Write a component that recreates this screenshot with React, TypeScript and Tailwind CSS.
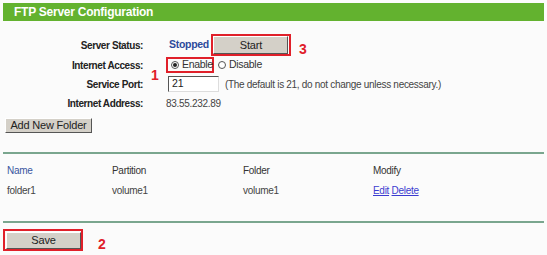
import React from "react";

const font = { fontFamily: "'Liberation Sans', Arial, sans-serif" };

function Radio({ checked }: { checked?: boolean }) {
  return (
    <span className="relative inline-flex w-[8px] h-[8px] rounded-full border border-[#555] bg-white items-center justify-center shrink-0">
      {checked && <span className="w-[4px] h-[4px] rounded-full bg-[#222]" />}
    </span>
  );
}

function Btn({ children, className }: { children: React.ReactNode; className?: string }) {
  return (
    <button
      className={
        "bg-[#d4d0c8] border border-t-white border-l-white border-r-[#555] border-b-[#555] text-[11px] text-[#222] tracking-[-0.2px] leading-none flex items-center justify-center " +
        (className ?? "")
      }
    >
      {children}
    </button>
  );
}

function Label({ children }: { children: React.ReactNode }) {
  return (
    <div className="w-[140px] text-right font-bold text-[10px] text-[#222] tracking-[-0.4px] shrink-0">
      {children}
    </div>
  );
}

export default function App() {
  return (
    <div className="w-[547px] h-[255px] bg-[#fbfbfb] p-[3px] overflow-hidden" style={font}>
      {/* Title bar */}
      <div className="h-[18px] bg-[#63b22f] flex items-center pl-[11px]">
        <span className="text-white font-bold text-[12px] tracking-[-0.25px]">FTP Server Configuration</span>
      </div>

      {/* Settings */}
      <div className="mt-[13px] flex flex-col">
        <div className="h-[22px] flex items-center">
          <Label>Server Status:</Label>
          <div className="ml-[26px] flex items-center">
            <span className="font-bold text-[10.5px] text-[#2d4a9c] tracking-[-0.3px]">Stopped</span>
            <div className="ml-[2px] border-2 border-[#e0202a] w-[80px] h-[22px] flex items-center justify-center">
              <Btn className="w-[75px] h-[18px] text-[11px]">Start</Btn>
            </div>
            <span className="ml-[8px] mt-[8px] text-[#e0202a] font-bold text-[14px]">3</span>
          </div>
        </div>

        <div className="mt-[1px] h-[16px] flex items-center">
          <Label>Internet Access:</Label>
          <div className="ml-[23px] flex items-center">
            <div className="relative border-2 border-[#e0202a] h-[16px] w-[48px] flex items-center pl-[3px] gap-[3px]">
              <Radio checked />
              <span className="text-[10.5px] text-[#333] tracking-[-0.3px]">Enable</span>
              <span className="absolute left-[-17px] top-[9px] text-[#e0202a] font-bold text-[14px] leading-none">1</span>
            </div>
            <div className="ml-[4px] flex items-center gap-[3px]">
              <Radio />
              <span className="text-[10.5px] text-[#333] tracking-[-0.3px]">Disable</span>
            </div>
          </div>
        </div>

        <div className="mt-[2px] h-[18px] flex items-center">
          <Label>Service Port:</Label>
          <div className="ml-[25px] flex items-center">
            <div className="w-[51px] h-[16px] bg-white border border-t-[#555] border-l-[#555] border-r-[#ddd] border-b-[#ddd] text-[10.5px] text-[#222] pl-[3px] flex items-center">
              21
            </div>
            <span className="ml-[6px] text-[10px] text-[#444] tracking-[-0.3px]">
              (The default is 21, do not change unless necessary.)
            </span>
          </div>
        </div>

        <div className="mt-[1px] h-[18px] flex items-center">
          <Label>Internet Address:</Label>
          <span className="ml-[23px] text-[10px] text-[#444] tracking-[-0.3px]">83.55.232.89</span>
        </div>

        <div className="mt-[6px] pl-[2px]">
          <Btn className="w-[87px] h-[15px] text-[10.5px]">Add New Folder</Btn>
        </div>
      </div>

      {/* Folder table */}
      <div className="mt-[19px] h-[2px] bg-[#7aa68e]" />
      <div className="pl-[4px] text-[10px] tracking-[-0.3px]">
        <div className="grid grid-cols-[105px_131px_130px_1fr] h-[20px] mt-[6px] items-center">
          <span className="text-[#3a55a0]">Name</span>
          <span className="text-[#333]">Partition</span>
          <span className="text-[#333]">Folder</span>
          <span className="text-[#333]">Modify</span>
        </div>
        <div className="grid grid-cols-[105px_131px_130px_1fr] h-[20px] items-center text-[#444]">
          <span>folder1</span>
          <span>volume1</span>
          <span>volume1</span>
          <span>
            <a className="text-[#3b3bd0] underline">Edit</a>{" "}
            <a className="text-[#3b3bd0] underline">Delete</a>
          </span>
        </div>
      </div>
      <div className="mt-[21px] h-[2px] bg-[#7aa68e]" />

      <div className="mt-[1px] flex items-center">
        <div className="border-2 border-[#e0202a] w-[80px] h-[22px] flex items-center pl-[1px] pt-[1px]">
          <Btn className="w-[75px] h-[17px] text-[11px]">Save</Btn>
        </div>
        <span className="ml-[15px] mt-[10px] text-[#e0202a] font-bold text-[14px]">2</span>
      </div>
    </div>
  );
}
